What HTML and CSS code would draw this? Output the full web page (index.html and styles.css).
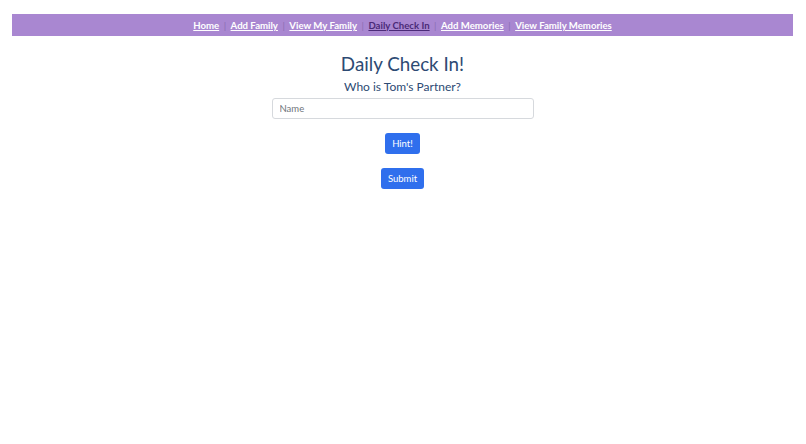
FILE: index.html
```html
<!DOCTYPE html>
<html>
<head>
<meta charset="utf-8">
<link rel="stylesheet" href="styles.css">
</head>
<body>
<nav class="nav">
  <a href="#" class="link">Home</a><span class="sep">|</span>
  <a href="#" class="link">Add Family</a><span class="sep">|</span>
  <a href="#" class="link">View My Family</a><span class="sep">|</span>
  <a href="#" class="link active">Daily Check In</a><span class="sep">|</span>
  <a href="#" class="link">Add Memories</a><span class="sep">|</span>
  <a href="#" class="link">View Family Memories</a>
</nav>
<main class="main">
  <h1 class="title">Daily Check In!</h1>
  <h2 class="question">Who is Tom's Partner?</h2>
  <input class="field" type="text" placeholder="Name">
  <button class="btn hint">Hint!</button>
  <button class="btn submit">Submit</button>
</main>
</body>
</html>
```
FILE: styles.css
```css
html, body { margin: 0; padding: 0; background: #fff; }
body { font-family: Lato, "Noto Sans", sans-serif; padding: 14px 13px 0 12px; }
.nav {
  background: #a987d1;
  height: 22px;
  display: flex;
  align-items: center;
  justify-content: center;
  font-size: 9.6px;
  font-weight: 700;
}
.link { color: #fff; text-decoration: underline; }
.link.active { color: #4b2a78; }
.sep { color: #8a6db3; margin: 0 4.5px; font-weight: 400; }
.main { display: flex; flex-direction: column; align-items: center; }
.title {
  font-size: 18.8px; font-weight: 400; color: #2d4a73;
  margin: 15px 0 0 0; line-height: 26px;
}
.question {
  font-size: 12px; font-weight: 400; color: #2d4a73;
  margin: 2px 0 0 0; line-height: 16px;
}
.field {
  margin-top: 3px;
  width: 262px; height: 21px; box-sizing: border-box;
  border: 1px solid #d6d9dd; border-radius: 3px;
  padding: 0 7px; font-family: inherit; font-size: 9.5px; color: #555;
}
.field::placeholder { color: #6f757b; }
.btn {
  background: #2f6fed; color: #fff; border: none; border-radius: 3px;
  font-family: inherit; font-size: 9.5px; height: 21px; padding: 0 7px;
}
.hint { margin-top: 14px; }
.submit { margin-top: 14px; }
```
